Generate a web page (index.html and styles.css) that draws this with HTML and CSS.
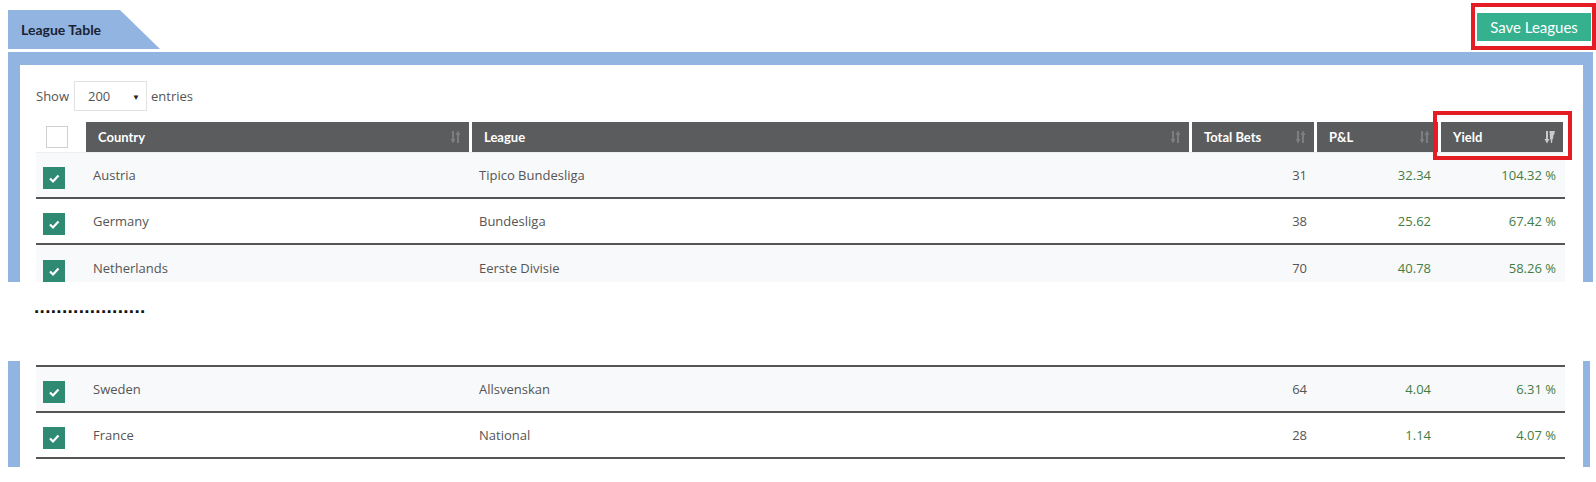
FILE: index.html
```html
<!DOCTYPE html>
<html>
<head>
<meta charset="utf-8">
<link rel="stylesheet" href="styles.css">
</head>
<body>
<div class="topbar">
  <div class="tab">League Table</div>
  <div class="save-wrap"><button class="save">Save Leagues</button></div>
</div>

<section class="panel panel-top">
  <div class="length">
    <span>Show</span>
    <span class="select"><span>200</span><span class="caret">&#9660;</span></span>
    <span>entries</span>
  </div>
  <div class="table">
    <div class="row head">
      <div class="cell chk"><span class="box"></span></div>
      <div class="cell th first">Country<svg class="sort" viewBox="0 0 11 14"><path d="M3 1V11M8 13V3" stroke="currentColor" stroke-width="2"/><path d="M0.5 9H5.5L3 13.5ZM5.5 5H10.5L8 0.5Z" fill="currentColor"/></svg></div>
      <div class="cell th">League<svg class="sort" viewBox="0 0 11 14"><path d="M3 1V11M8 13V3" stroke="currentColor" stroke-width="2"/><path d="M0.5 9H5.5L3 13.5ZM5.5 5H10.5L8 0.5Z" fill="currentColor"/></svg></div>
      <div class="cell th">Total Bets<svg class="sort" viewBox="0 0 11 14"><path d="M3 1V11M8 13V3" stroke="currentColor" stroke-width="2"/><path d="M0.5 9H5.5L3 13.5ZM5.5 5H10.5L8 0.5Z" fill="currentColor"/></svg></div>
      <div class="cell th">P&amp;L<svg class="sort" viewBox="0 0 11 14"><path d="M3 1V11M8 13V3" stroke="currentColor" stroke-width="2"/><path d="M0.5 9H5.5L3 13.5ZM5.5 5H10.5L8 0.5Z" fill="currentColor"/></svg></div>
      <div class="cell th yield">Yield<svg class="sort active" viewBox="0 0 11 14"><path d="M3 1V11" stroke="currentColor" stroke-width="2"/><path d="M0.5 9H5.5L3 13.5Z" fill="currentColor"/><path d="M5.5 1H11L10 5H9.5L9 9H8.5L8 13H7L6.5 9H6Z" fill="currentColor"/></svg><span class="highlight"></span></div>
    </div>
    <div class="row alt">
      <div class="cell chk"><span class="box on"><svg viewBox="0 0 22 22"><path d="M7 11.5L10 14.5L15.5 8.5" fill="none" stroke="#fff" stroke-width="2.2"/></svg></span></div>
      <div class="cell">Austria</div>
      <div class="cell">Tipico Bundesliga</div>
      <div class="cell num">31</div>
      <div class="cell num g">32.34</div>
      <div class="cell num g y">104.32 %</div>
    </div>
    <div class="row">
      <div class="cell chk"><span class="box on"><svg viewBox="0 0 22 22"><path d="M7 11.5L10 14.5L15.5 8.5" fill="none" stroke="#fff" stroke-width="2.2"/></svg></span></div>
      <div class="cell">Germany</div>
      <div class="cell">Bundesliga</div>
      <div class="cell num">38</div>
      <div class="cell num g">25.62</div>
      <div class="cell num g y">67.42 %</div>
    </div>
    <div class="row alt last-cut">
      <div class="cell chk"><span class="box on"><svg viewBox="0 0 22 22"><path d="M7 11.5L10 14.5L15.5 8.5" fill="none" stroke="#fff" stroke-width="2.2"/></svg></span></div>
      <div class="cell">Netherlands</div>
      <div class="cell">Eerste Divisie</div>
      <div class="cell num">70</div>
      <div class="cell num g">40.78</div>
      <div class="cell num g y">58.26 %</div>
    </div>
  </div>
</section>

<div class="ellipsis">....................</div>

<section class="panel panel-bottom">
  <div class="table bordered">
    <div class="row alt">
      <div class="cell chk"><span class="box on"><svg viewBox="0 0 22 22"><path d="M7 11.5L10 14.5L15.5 8.5" fill="none" stroke="#fff" stroke-width="2.2"/></svg></span></div>
      <div class="cell">Sweden</div>
      <div class="cell">Allsvenskan</div>
      <div class="cell num">64</div>
      <div class="cell num g">4.04</div>
      <div class="cell num g y">6.31 %</div>
    </div>
    <div class="row">
      <div class="cell chk"><span class="box on"><svg viewBox="0 0 22 22"><path d="M7 11.5L10 14.5L15.5 8.5" fill="none" stroke="#fff" stroke-width="2.2"/></svg></span></div>
      <div class="cell">France</div>
      <div class="cell">National</div>
      <div class="cell num">28</div>
      <div class="cell num g">1.14</div>
      <div class="cell num g y">4.07 %</div>
    </div>
  </div>
</section>
</body>
</html>
```

FILE: styles.css
```css
* { box-sizing: border-box; }
html, body { margin: 0; padding: 0; background: #fff; }
body {
  font-family: "Open Sans", "Liberation Sans", sans-serif;
  font-size: 13px;
  color: #555;
  width: 1596px;
  height: 482px;
  overflow: hidden;
}

.topbar {
  height: 52px;
  display: flex;
  justify-content: space-between;
  align-items: flex-start;
}
.tab {
  margin: 10px 0 0 8px;
  width: 152px;
  height: 39px;
  background: #92b4e1;
  clip-path: polygon(0 0, 112px 0, 100% 100%, 0 100%);
  padding-left: 13px;
  display: flex;
  align-items: center;
  font-family: "Lato", sans-serif;
  font-weight: 700;
  font-size: 14px;
  color: #1b2233;
}
.save-wrap {
  margin-top: 3px;
  border: 4px solid #e41c24;
  padding: 6px 1px 5px 2px;
}
.save {
  display: block;
  width: 114px;
  height: 28px;
  border: 0;
  background: #35b18f;
  color: #fff;
  font-family: "Lato", sans-serif;
  font-size: 15px;
  padding: 0;
}

.panel {
  margin-left: 8px;
  background: #fff;
  border-style: solid;
  border-color: #92b4e1;
}
.panel-top {
  width: 1585px;
  height: 230px;
  border-width: 13px 10px 0 12px;
  padding: 16px 18px 0 16px;
  overflow: hidden;
}
.panel-bottom {
  width: 1582px;
  height: 106px;
  border-width: 0 7px 0 12px;
  padding: 4px 18px 0 16px;
}

.length {
  height: 30px;
  display: flex;
  align-items: center;
  color: #555;
}
.select {
  margin: 0 4px 0 5px;
  width: 73px;
  height: 30px;
  border: 1px solid #e2e2e2;
  display: flex;
  align-items: center;
  padding: 0 0 0 13px;
  position: relative;
}
.select .caret {
  position: absolute;
  right: 6px;
  top: 9px;
  font-size: 8px;
  color: #222;
}

.table { width: 1529px; }
.length + .table { margin-top: 11px; }
.bordered { border-top: 2px solid #555; }

.row {
  display: grid;
  grid-template-columns: 50px 383px 720px 125px 124px 127px;
  height: 46px;
  border-bottom: 2px solid #555;
  background: #fff;
}
.row.alt { background: #f8f9fa; }
.row.last-cut { border-bottom: 0; }
.row.head {
  height: 31px;
  border-bottom: 1px solid #eceef0;
  background: #fff;
}

.cell {
  display: flex;
  align-items: center;
  padding: 0 7px;
  border-left: 3px solid transparent;
  white-space: nowrap;
}
.cell.chk, .row > .cell:nth-child(2) { border-left: 0; }
.cell.chk { padding: 6px 0 0 7px; }
.head .cell.chk { padding: 0 0 0 10px; }

.th {
  background: #5b5c5e;
  border-left: 3px solid #fff;
  background-clip: padding-box;
  color: #fff;
  font-family: "Lato", sans-serif;
  font-weight: 700;
  font-size: 13px;
  padding: 0 8px 0 12px;
  justify-content: space-between;
  position: relative;
}
.th.first { border-left: 0; }
.th.yield { margin-right: 2px; }

.sort {
  width: 11px;
  height: 14px;
  color: #7d7e80;
  flex: none;
}
.sort.active { color: #c9cacb; }

.highlight {
  position: absolute;
  top: -11px;
  bottom: -8px;
  left: -8px;
  right: -9px;
  border: 4px solid #e41c24;
}

.box {
  width: 22px;
  height: 22px;
  display: block;
  border: 1px solid #cfcfcf;
  background: #fff;
}
.box.on {
  border: 0;
  background: #2f8a74;
}
.box svg { display: block; width: 22px; height: 22px; }

.num { justify-content: flex-end; }
.g { color: #437d43; }
.y { padding-right: 9px; }

.ellipsis {
  height: 79px;
  padding: 15px 0 0 34px;
  font-family: "Liberation Sans", sans-serif;
  font-weight: 700;
  font-size: 19px;
  line-height: 20px;
  letter-spacing: 0.3px;
  color: #111;
}
```
